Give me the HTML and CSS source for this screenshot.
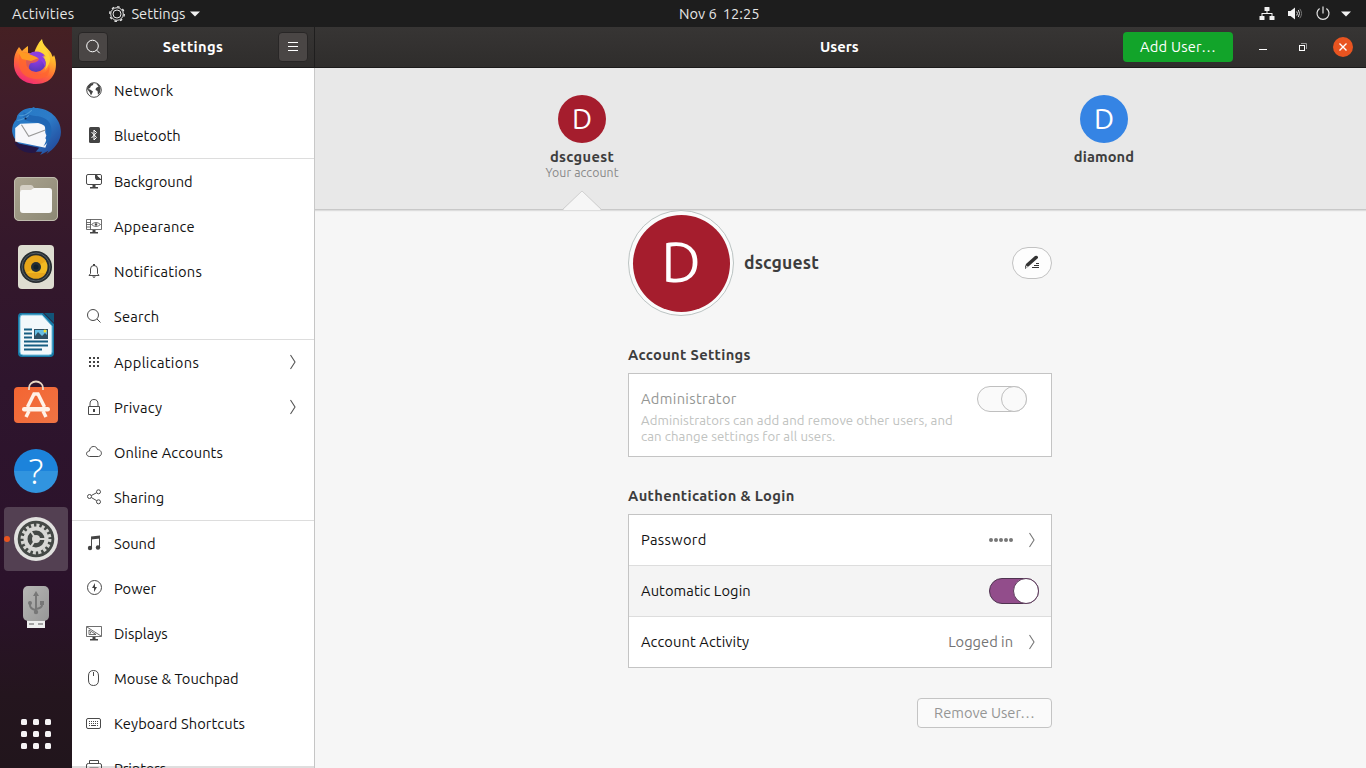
FILE: index.html
```html
<!DOCTYPE html>
<html lang="en">
<head>
<meta charset="utf-8">
<title>Settings</title>
<link rel="stylesheet" href="styles.css">
</head>
<body>
<div class="desktop">
<header class="topbar">
  <div class="top-left">
    <span class="activities ls2">Activities</span>
    <span class="appmenu">
      <svg width="16" height="16" viewBox="0 0 16 16" fill="none" stroke="#e6e6e6"><circle cx="8" cy="8" r="4" /><circle cx="8" cy="8" r="6.300"/><circle cx="8" cy="8" r="7.300" stroke-width="1.300" stroke-dasharray="2.600 3.130"/></svg>
      <span class="appname">Settings</span>
      <svg class="caret" width="10" height="6" viewBox="0 0 10 6"><path d="M0 .5h10L5 5.500z" fill="#f2f2f2"/></svg>
    </span>
  </div>
  <div class="clock"><span>Nov 6</span><span>12:25</span></div>
  <div class="tray">
    <svg width="16" height="16" viewBox="0 0 16 16" fill="#f2f2f2"><rect x="5.500" y="1" width="5" height="4" rx=".6"/><rect x="0.500" y="10" width="5" height="4" rx=".6"/><rect x="10.500" y="10" width="5" height="4" rx=".6"/><path d="M7.500 5h1v2H13.500v3h-1V8h-9v2h-1V7h5z"/></svg>
    <svg width="16" height="16" viewBox="0 0 16 16"><path d="M1 5h2.500L8 1.500v12L3.500 10H1z" fill="#f2f2f2"/><path d="M9.700 5.500q1.500 2 0 4M11.300 4q2.400 3.500 0 7" fill="none" stroke="#ddd"/><path d="M12.800 2.800q3.500 4.700 0 9.400" fill="none" stroke="#777"/></svg>
    <svg width="16" height="16" viewBox="0 0 16 16" fill="none" stroke="#e6e6e6" stroke-width="1.200"><path d="M4.600 2.400a6 6 0 1 0 6.800 0M8 .5v7"/></svg>
    <svg class="tray-caret" width="10" height="6" viewBox="0 0 10 6"><path d="M0 .5h10L5 5.500z" fill="#f2f2f2"/></svg>
  </div>
</header>
<div class="workspace">
<nav class="dock">
  <div class="launch firefox"><svg width="48" height="48" viewBox="0 0 48 48">
    <defs><linearGradient id="ff" x1=".8" y1="0" x2=".3" y2="1"><stop offset="0" stop-color="#fff044"/><stop offset=".35" stop-color="#ffb22c"/><stop offset=".65" stop-color="#ff6a35"/><stop offset="1" stop-color="#f0277a"/></linearGradient><radialGradient id="fp" cx=".5" cy=".2" r=".8"><stop offset="0" stop-color="#a63cf3"/><stop offset="1" stop-color="#5438b8"/></radialGradient></defs>
    <path d="M24 47C11 47 1 38 2 25 2 17 5 13 7 10l3 4c2-2 4-4 6-5v7l6 1c1-5 4-11 8-15 1 7 6 9 9 14 1 2 1 3 2 4l1-2c5 12 1 29-18 29z" fill="url(#ff)"/><circle cx="24" cy="25" r="10" fill="url(#fp)"/><path d="M7 17c5-3 12-1 15 1l5 4c-1 3-5 4-8 4-4 3-2 9 4 11 7 2 14-3 14-9 2 9-3 14-12 14S8 37 7 28z" fill="#ff642f" opacity=".75"/><path d="M6 15c4-1 9 2 17 3l4 3-8 3-9-2z" fill="#ff9a22"/><path d="M18 17c6-4 14-2 16 3l-5-1c5 3 6 8 4 14 7-8 6-14 1-20-3-3-4-5-4-9-3 3-6 7-7 12z" fill="#ffda38" opacity=".8"/><path d="M17 17c5-4 13-3 16 2l-4-1c4 3 5 7 4 12-2-6-6-9-11-11z" fill="#8c3fe0"/></svg></div>
  <div class="launch"><svg width="52" height="52" viewBox="0 0 50 50">
    <defs><linearGradient id="tb" x2="1" y2="1"><stop stop-color="#2579c5"/><stop offset=".5" stop-color="#2d7cc8"/><stop offset="1" stop-color="#203d90"/></linearGradient></defs>
    <path d="M7 10C11 5 15 3 21 3l2-1 1 1c14 0 25 10 25 23 0 9-7 17-14 21l2-3-8 4 2-3C16 46 3 36 2 25c0-4 1-8 4-11z" fill="url(#tb)"/><path d="M4 36l24 5-4 5C14 47 7 42 4 36z" fill="#251746"/><path d="M5 22l5-4 24-1c0 5-1 9 1 12l-1 3 2 3-2 6L5 35z" fill="#f7f7fa"/><path d="M11 19l7 11 16-6" fill="none" stroke="#999" stroke-width="1.100"/><path d="M13 13c4 5 14 2 20 7 4 7 3 14-1 20 10-7 10-21 3-26-6-5-15-2-22-7z" fill="#2067b5"/><path d="M9 10c4 1 8-1 12-5M7 15c5-1 8-2 11-5" stroke="#4f9bd5" fill="none"/><circle cx="15" cy="13" r="1" fill="#0c234d"/></svg></div>
  <div class="launch"><svg width="46" height="46" viewBox="0 0 46 46"><defs><linearGradient id="file" y2="1"><stop stop-color="#aaa38f"/><stop offset="1" stop-color="#8c8874"/></linearGradient></defs><rect x="1" y="1" width="44" height="44" rx="5" fill="url(#file)"/><rect x="1.500" y="1.500" width="43" height="43" rx="4.500" fill="none" stroke="#c0bcae"/><path d="M7 15V12q0-3 3-3h8q2 0 3 3l1 2z" fill="#d4cfc4"/><path d="M7 16q0-2 2-2h9l3-2h15q3 0 3 3v19q0 3-3 3H10q-3 0-3-3z" fill="#f8f8f7"/></svg></div>
  <div class="launch"><svg width="46" height="46" viewBox="0 0 46 46"><rect x="5" y="1" width="36" height="44" rx="4" fill="#deddd1"/><circle cx="23" cy="23" r="16" fill="#272d30"/><circle cx="23" cy="23" r="14" fill="none" stroke="#566066"/><circle cx="23" cy="23" r="11.500" fill="#f2ba22"/><path d="M13 17a11.500 11.500 0 0 1 20 0L13 29a11.500 11.500 0 0 1 0-12M33 29a11.500 11.500 0 0 1-20 0z" fill="#df9a16" opacity=".6"/><circle cx="23" cy="23" r="5" fill="#252e34"/><circle cx="23" cy="23" r="2.500" fill="#12202a"/></svg></div>
  <div class="launch"><svg width="46" height="46" viewBox="0 0 46 46"><path d="M8 1h22l11 11v29q0 4-4 4H9q-4 0-4-4V5q0-4 3-4z" fill="#1679a6"/><path d="M31 1h10v10z" fill="#125479"/><path d="M9 3h20l10 11v26q0 3-3 3H10q-3 0-3-3V6q0-3 2-3z" fill="#f2f8fb" stroke="#76bfdd"/><path d="M11 17.500h8M11 21.500h8M11 25.500h8M11 29.500h24M11 33.500h24M11 37.500h18" stroke="#155d82" stroke-width="1.800"/><rect x="21" y="17" width="14" height="10" fill="#2e5064"/><path d="M22 18h12v5l-2-2-3 3-4-4-3 4z" fill="#65bfe5"/><circle cx="32" cy="19" r="1.500" fill="#f5df30"/></svg></div>
  <div class="launch"><svg width="46" height="46" viewBox="0 0 46 46"><defs><linearGradient id="bag" y2="1"><stop stop-color="#f46532"/><stop offset="1" stop-color="#ef7444"/></linearGradient></defs><rect x="1" y="7" width="44" height="36" rx="4" fill="url(#bag)"/><path d="M16 10V8a7 6.500 0 0 1 14 0v2" fill="none" stroke="#e9d8c5" stroke-width="1.800"/><path d="M14.500 27L21 14h4l6.500 13M16 31l-3 6M30 31l3 6" fill="none" stroke="#fff2e8" stroke-width="3.500"/><rect x="9" y="27" width="28" height="4.500" rx="2.200" fill="#fff2e8"/></svg></div>
  <div class="launch help"><span>?</span></div>
  <div class="launch selected"><svg width="46" height="46" viewBox="0 0 46 46"><circle cx="23" cy="23" r="22" fill="#e1e1df"/><circle cx="23" cy="23" r="18.300" fill="#444946"/><circle cx="23" cy="23" r="13.700" fill="none" stroke="#d4d5d1" stroke-width="3.500" stroke-dasharray="3 2.380"/><circle cx="23" cy="23" r="10.500" fill="none" stroke="#d7d8d5" stroke-width="4"/><circle cx="23" cy="23" r="4" fill="#d8d8d5"/><path d="M23 23h10M23 23l-6-9M23 23l-6 9" stroke="#d8d8d5" stroke-width="2"/></svg></div>
  <div class="launch"><svg width="46" height="46" viewBox="0 0 46 46"><defs><linearGradient id="usb" y2="1"><stop stop-color="#b7b7b5"/><stop offset="1" stop-color="#979797"/></linearGradient></defs><rect x="14" y="33" width="18" height="11" fill="#eee"/><rect x="10" y="2" width="26" height="35" rx="5" fill="url(#usb)"/><path d="M16 40h5m4 0h5" stroke="#8a8a8a" stroke-width="1.500"/><path d="M23 28V11m-6 8v2q0 4 6 5m6-7v2q0 3-6 4" fill="none" stroke="#777" stroke-width="2"/><path d="M20 12l3-5 3 5z" fill="#777"/><circle cx="17" cy="19" r="2" fill="#777"/><rect x="27" y="17" width="4" height="4" fill="#777"/><circle cx="23" cy="28" r="2.200" fill="#777"/></svg></div>
  <div class="all-apps"><i></i><i></i><i></i><i></i><i></i><i></i><i></i><i></i><i></i></div>
</nav>
<main class="window">
  <header class="titlebar">
    <div class="side-title">
      <span class="head-btn"><svg width="16" height="16" viewBox="0 0 16 16" fill="none" stroke="#fff"><circle cx="7.500" cy="7" r="5.800"/><path d="M11.700 11.200l3 3"/></svg></span>
      <b class="ls3">Settings</b>
      <span class="head-btn"><svg width="16" height="16" viewBox="0 0 16 16" stroke="#fff"><path d="M3 3.500h10M3 7.500h10M3 11.500h10"/></svg></span>
    </div>
    <div class="main-title">
      <b class="t-users">Users</b>
      <div class="controls">
        <span class="add-user ls2">Add User…</span>
        <svg class="min" width="16" height="16" viewBox="0 0 16 16"><path d="M4 10.500h8" stroke="#fff"/></svg>
        <svg class="max" width="16" height="16" viewBox="0 0 16 16" fill="none"><path d="M6 4.500h5.500V10" stroke="#999"/><rect x="4.500" y="6.500" width="5" height="5" stroke="#fff"/></svg>
        <span class="close"><svg width="10" height="10" viewBox="0 0 10 10"><path d="M1.500 1.500l7 7m0-7l-7 7" stroke="#fff" stroke-width="1.400"/></svg></span>
      </div>
    </div>
  </header>
  <div class="content">
    <aside class="sidebar">
      <div class="group">
        <div class="item"><svg viewBox="0 0 16 16"><circle cx="8" cy="8" r="7.300" class="line"/><path d="M1.500 5q2-4 6-4l-.5 2-2 1-1 2-2 1 2 .5 3 2-2 4-1.500-3.500-2.500-3zM10 1.500q4 1 4.500 5l-.5 4-2 2.500-.5-4-2-1 .5-2 2.500-1.500z"/></svg><span class="ls3">Network</span></div>
        <div class="item"><svg viewBox="0 0 16 16"><rect x="3" y="0" width="11" height="16" rx="1.500"/><path d="M5.500 5l5 5.500-2.500 2.500V3l2.500 2.500-5 5.500" fill="none" stroke="#fff" stroke-width="1"/></svg><span>Bluetooth</span></div>
      </div>
      <div class="group">
        <div class="item"><svg viewBox="0 0 16 16"><rect x=".5" y="1.500" width="15" height="10" rx="1.500" class="line"/><path d="M6.500 12h3v2H12v1.500H4V14h2.500zM9 2v3l1 2h5V6l-4-4z"/><path d="M11 2.500h4v3.500z" fill="#fff"/></svg><span>Background</span></div>
        <div class="item"><svg viewBox="0 0 16 16"><path d="M.5 1.500h15v10H.5zM4.500 1.500v10M.5 4.500h4M.5 6.500h4M.5 9h4M5.500 6.500q4.500-4 9 0-4.500 4-9 0z" class="line thin"/><circle cx="10" cy="6.500" r="1.200"/><path d="M6.500 12h3v2H12v1.500H4V14h2.500z"/></svg><span class="ls2">Appearance</span></div>
        <div class="item"><svg viewBox="0 0 16 16"><path d="M3 12.500l1.500-2V6q0-3.500 3.500-3.500T11.500 6v4.500l1.500 2z" class="line"/><path d="M7 1h2v2H7zM6 13.500h4L8 15z"/></svg><span class="ls2">Notifications</span></div>
        <div class="item"><svg viewBox="0 0 16 16" class="line"><circle cx="7" cy="7" r="5.500"/><path d="M11 11l3.500 3.500"/></svg><span class="ls2">Search</span></div>
      </div>
      <div class="group">
        <div class="item"><svg viewBox="0 0 16 16"><path d="M3 3h2v2H3zm4 0h2v2H7zm4 0h2v2h-2zM3 7h2v2H3zm4 0h2v2H7zm4 0h2v2h-2zM3 11h2v2H3zm4 0h2v2H7zm4 0h2v2h-2z"/></svg><span class="ls3">Applications</span><svg class="chev" viewBox="0 0 8 16"><path d="M1.500 1l4.500 7-4.500 7"/></svg></div>
        <div class="item"><svg viewBox="0 0 16 16"><path d="M2.500 7.500h11v8h-11zM4 7V5q0-4.500 4-4.500T12 5v2" class="line"/><path d="M7 10h2v3H7z"/></svg><span class="ls2">Privacy</span><svg class="chev" viewBox="0 0 8 16"><path d="M1.500 1l4.500 7-4.500 7"/></svg></div>
        <div class="item"><svg viewBox="0 0 16 16"><path d="M3.500 12.500c-4-.5-4-5 0-5.500 0-5.500 7-6 8-1.500 5 .5 5 6.500 1 7z" class="line"/></svg><span class="ls1">Online Accounts</span></div>
        <div class="item"><svg viewBox="0 0 16 16" class="line"><circle cx="3.500" cy="7.500" r="2"/><circle cx="12.500" cy="2.800" r="2"/><circle cx="12.500" cy="12.800" r="2"/><path d="M5.300 6.500l5.400-2.800M5.300 8.500l5.400 3.200"/></svg><span class="ls1">Sharing</span></div>
      </div>
      <div class="group">
        <div class="item"><svg viewBox="0 0 16 16"><path d="M5 1.500l9-1v3l-9 1z"/><path d="M5.500 2v11M13.500 1v11" class="line"/><circle cx="4" cy="13" r="2.200"/><circle cx="12" cy="12.500" r="2.200"/></svg><span>Sound</span></div>
        <div class="item"><svg viewBox="0 0 16 16"><circle cx="8.500" cy="7.500" r="7" class="line"/><path d="M9 3L6 8h2v4l3-5H9z"/></svg><span>Power</span></div>
        <div class="item"><svg viewBox="0 0 16 16"><path d="M.5 1.500h15v10H.5zM1 2l14 9M3 5v4.500h7zM4.500 7v1.500" class="line thin"/><path d="M6.500 12h3v2H12v1.500H4V14h2.500z"/></svg><span>Displays</span></div>
        <div class="item"><svg viewBox="0 0 16 16"><path d="M2.500 6q0-5.500 5-5.500t5 5.500v4q0 5.500-5 5.500t-5-5.500zM7.500 2v4" class="line"/></svg><span>Mouse &amp; Touchpad</span></div>
        <div class="item"><svg viewBox="0 0 16 16"><rect x=".5" y="3.500" width="14" height="10" rx="1.500" class="line"/><path d="M3 6.500h1M5 6.500h1M7 6.500h1M9 6.500h1M11 6.500h1M3 8.500h1M5 8.500h1M7 8.500h1M9 8.500h1M11 8.500h1M3 10.500h1M5 10.500h5M11 10.500h1" class="line"/></svg><span class="ls1">Keyboard Shortcuts</span></div>
        <div class="item"><svg viewBox="0 0 16 16"><path d="M3.500 4V.5h9V4M3 10.500H.5V5q0-1.500 2-1.500h11q2 0 2 1.500v5.500H13M3.500 8h9v6h-9z" class="line"/></svg><span>Printers</span></div>
      </div>
    </aside>
    <section class="panel">
      <div class="users">
        <div class="user active"><span class="avatar red">D</span><b class="uname ls3">dscguest</b><small>Your account</small><svg class="pointer" width="38" height="20" viewBox="0 0 38 20"><path d="M0 20L19 1l19 19z" fill="#f6f6f6"/><path d="M0 19L19 1l19 18" fill="none" stroke="#c9c9c9" stroke-width=".8"/></svg></div>
        <div class="user"><span class="avatar blue">D</span><b class="uname ls1">diamond</b></div>
      </div>
      <div class="details">
        <div class="profile"><span class="portrait"><span>D</span></span><b>dscguest</b><span class="edit"><svg width="16" height="16" viewBox="0 0 16 16" fill="#333"><path d="M1 12l1-3 9-8q2-1 3 1v1l-9 8-4 3z"/><path d="M1.500 13l1-2.500 1.500 1.500z" fill="#eee"/><path d="M12 8h3v1h-3zM10 10h5v1h-5zM8 12h7v1H8z"/></svg></span></div>
        <h2 class="ls3">Account Settings</h2>
        <div class="card admin"><div class="copy"><span class="admin-label ls3">Administrator</span><p><span class="desc">Administrators can add and remove other users, and</span><br><span class="desc">can change settings for all users.</span></p></div><span class="switch off"><i></i></span></div>
        <h2 class="ls3">Authentication &amp; Login</h2>
        <div class="card">
          <div class="row"><span class="ls3">Password</span><span class="dots"><i></i><i></i><i></i><i></i><i></i></span><svg class="chev" viewBox="0 0 8 16"><path d="M1.500 1l4.500 7-4.500 7"/></svg></div>
          <div class="row shade"><span class="ls1">Automatic Login</span><span class="switch on"><i></i></span></div>
          <div class="row"><span class="ls1">Account Activity</span><span class="value">Logged in</span><svg class="chev" viewBox="0 0 8 16"><path d="M1.500 1l4.500 7-4.500 7"/></svg></div>
        </div>
        <div class="actions"><span class="remove">Remove User…</span></div>
      </div>
    </section>
  </div>
</main>
</div>
</div>
</body>
</html>
```
FILE: styles.css
```css
* { box-sizing: border-box; }
body { margin: 0; font: 14.667px/20px "Ubuntu", "Noto Sans", sans-serif; color: #111; overflow: hidden; }
svg { display: block; flex: none; }
.ls1 { letter-spacing: .1px; }
.ls2 { letter-spacing: .23px; }
.ls3 { letter-spacing: .34px; }
.desktop { width: 1366px; height: 768px; display: flex; flex-direction: column; overflow: hidden; }
.topbar { height: 27px; flex: none; background: #1d1d1d; color: #e6e6e6; display: grid; grid-template-columns: 667px auto 1fr; align-items: center; padding: 0 15px 0 12px; white-space: nowrap; }
.top-left, .appmenu, .clock, .tray { display: flex; align-items: center; }
.top-left { gap: 35px; }
.appmenu { gap: 6px; }
.appmenu .caret { margin-left: -1px; }
.clock { gap: 6px; }
.tray { justify-content: flex-end; gap: 12px; }
.tray-caret { margin-left: -2px; }
.workspace { flex: 1; min-height: 0; display: flex; }
.dock { width: 72px; flex: none; background: linear-gradient(#452023 0, #401d2a 10%, #34182b 30%, #2e152d 48%, #2b122b 75%, #24151e 90%, #21151c 100%); display: flex; flex-direction: column; align-items: center; padding: 4px 0 19px; }
.launch { width: 64px; height: 64px; margin: 0 0 4px; flex: none; display: flex; align-items: center; justify-content: center; border-radius: 4px; }
.firefox svg { margin-bottom: 4px; }
.launch.selected { background: #534052; position: relative; }
.launch.selected::before { content: ""; position: absolute; left: 0; top: 29px; width: 6px; height: 6px; border-radius: 50%; background: #e95420; }
.help span { width: 44px; height: 44px; border-radius: 50%; background: linear-gradient(#1c83db 0 50%, #3194df 50%); color: #fff; text-align: center; font: 35px/44px "Noto Sans", sans-serif; font-weight: 300; }
.all-apps { margin-top: auto; display: grid; grid-template-columns: repeat(3, 6px); gap: 6px; }
.all-apps i { height: 6px; border-radius: 1.5px; background: #f5f3f5; }
.window { flex: 1; display: flex; flex-direction: column; min-width: 0; }
.titlebar { height: 41px; flex: none; display: flex; background: linear-gradient(#373534, #2f2d2c); border-bottom: 1px solid #1c1b1b; color: #fff; }
.side-title { width: 243px; border-right: 1px solid #1f1e1e; display: flex; align-items: center; justify-content: space-between; padding: 0 6px; }
.head-btn { width: 30px; height: 30px; border: 1px solid #282626; border-radius: 4px; background: #4a4645; display: flex; align-items: center; justify-content: center; }
.main-title { flex: 1; display: grid; grid-template-columns: 1fr auto 1fr; align-items: center; padding: 0 13px 0 10px; }
.main-title { grid-template-columns: 495px auto 1fr; }
.t-users { grid-column: 2; }
.controls { display: flex; align-items: center; justify-content: flex-end; }
.add-user { width: 110px; height: 30px; border-radius: 4px; background: #12a42a; text-align: center; line-height: 30px; }
.min { margin-left: 22px; }
.max { margin-left: 24px; }
.close { width: 20px; height: 20px; margin-left: 22px; border-radius: 50%; background: #e95420; display: flex; align-items: center; justify-content: center; }
.content { flex: 1; min-height: 0; display: flex; }
.sidebar { width: 243px; flex: none; background: #fff; border-right: 1px solid #c5c5c5; overflow: hidden; box-shadow: inset 0 -2px #dedede; }
.group + .group { border-top: 1px solid #ddd; }
.item { height: 45px; display: flex; align-items: center; padding: 0 17px 0 14px; gap: 12px; white-space: nowrap; }
.item > svg:first-child { width: 16px; height: 16px; margin-bottom: 1px; fill: #444; }
.line, .item > svg.line:first-child { fill: none; stroke: #4a4a4a; }
.line.thin { stroke-width: .8; }
.item > span { flex: 1; }
.chev { width: 8px; height: 16px; fill: none; stroke: #555; stroke-width: 1.1; }
.item .chev { margin-bottom: 1px; }
.panel { flex: 1; min-width: 0; background: #f6f6f6; }
.users { height: 142px; background: #e8e8e8; border-bottom: 1px solid #c8c8c8; box-shadow: 0 1px 1px #ddd; display: grid; grid-template-columns: 522px 522px; padding: 27px 0 0 6px; }
.user { display: flex; flex-direction: column; align-items: center; color: #3d3d3d; position: relative; }
.avatar { width: 48px; height: 48px; border-radius: 50%; color: #fff; font-size: 28.5px; line-height: 47px; text-align: center; }
.red { background: #a51d2d; }
.blue { background: #3584e4; }
.uname { margin-top: 4px; }
.user small { font-size: 12.3px; line-height: 16px; letter-spacing: .1px; margin-top: -2px; color: #888; }
.pointer { position: absolute; left: 242px; bottom: -1px; }
.details { width: 424px; margin-left: 313px; }
.profile { height: 106px; display: flex; align-items: center; }
.portrait { width: 106px; height: 106px; border: 1px solid #bcc4c3; border-radius: 50%; background: #fbfbfb; display: flex; align-items: center; justify-content: center; }
.portrait span { width: 97px; height: 97px; border-radius: 50%; background: #a51d2d; color: #fff; font-size: 56px; line-height: 94px; text-align: center; }
.profile b { margin-left: 10px; font-size: 17.6px; letter-spacing: .13px; color: #3d3d3d; flex: 1; }
.edit { width: 40px; height: 32px; border: 1px solid #c2c2c2; border-radius: 16px; background: #fdfdfd; display: flex; align-items: center; justify-content: center; }
h2 { margin: 29px 0 8px; font-size: 14.667px; line-height: 20px; color: #3d3d3d; }
.card { border: 1px solid #c4c4c4; background: #fff; }
.admin { height: 84px; display: flex; justify-content: space-between; padding: 12px 24px 0 12px; color: #949694; white-space: nowrap; }
.copy { padding-top: 3px; }
.admin-label { display: block; }
.admin p { margin: 3px 0 0; font-size: 13.2px; line-height: 16px; color: #c0c2c0; }
.desc { letter-spacing: .08px; }
.switch { width: 50px; height: 26px; border-radius: 13px; border: 1px solid #bfbfbf; display: flex; justify-content: flex-end; flex: none; }
.switch i { width: 26px; height: 26px; margin: -1px; border: 1px solid #bfbfbf; border-radius: 50%; background: #fafafa; }
.switch.off { background: #fafafa; }
.switch.on { background: #924d8b; border-color: #4f3350; }
.switch.on i { background: #fff; border-color: #5d3b5b; }
.row { height: 51px; display: flex; align-items: center; padding: 0 12px; border-top: 1px solid #ddd; }
.row:first-child { border: 0; height: 50px; }
.row > span:first-child { flex: 1; }
.shade { background: #f4f4f4; }
.row .chev { margin: 0 3px 0 15px; stroke: #777; }
.dots { display: flex; gap: 1px; }
.dots i { width: 4px; height: 4px; border-radius: 50%; background: #777; }
.value { color: #747474; }
.actions { display: flex; justify-content: flex-end; margin-top: 30px; }
.remove { width: 135px; height: 30px; border: 1px solid #c4c4c4; border-radius: 4px; background: #fafafa; color: #959695; line-height: 28px; text-align: center; }
```
